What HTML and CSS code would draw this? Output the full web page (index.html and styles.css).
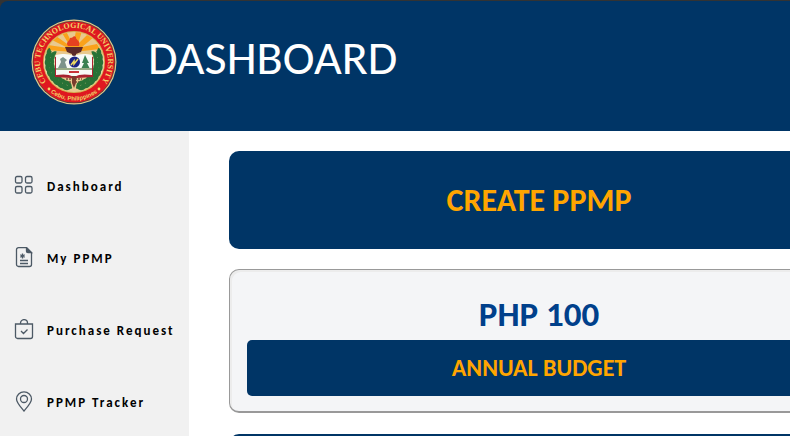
FILE: index.html
```html
<!DOCTYPE html>
<html lang="en">
<head>
<meta charset="utf-8">
<title>Dashboard</title>
<link rel="stylesheet" href="styles.css">
</head>
<body>
<header class="header">
  <svg class="seal" viewBox="0 0 86 86" role="img" aria-label="Cebu Technological University seal">
    <defs>
      <path id="arc-top" d="M19 67A34 34 0 1 1 67 67"/>
      <path id="arc-bottom" d="M8 59A38.500 38.500 0 0 0 78 59"/>
      <clipPath id="inner"><circle cx="43" cy="43" r="30"/></clipPath>
      <path id="leaf" d="M18 47C13 45 13 41 15 38c3 2 4 4 3 9zM18 47c0-4 1-7 5-8 1 4-1 7-5 8z"/>
      <g id="laurel">
        <path d="M20 32C14 49 25 66 41 69" fill="none" stroke="#287236" stroke-width="1.500"/>
        <use href="#leaf" transform="rotate(20 43 43)"/>
        <use href="#leaf" transform="rotate(8 43 43)"/>
        <use href="#leaf" transform="rotate(-4 43 43)"/>
        <use href="#leaf" transform="rotate(-16 43 43)"/>
        <use href="#leaf" transform="rotate(-28 43 43)"/>
        <use href="#leaf" transform="rotate(-40 43 43)"/>
        <use href="#leaf" transform="rotate(-52 43 43)"/>
        <use href="#leaf" transform="rotate(-64 43 43)"/>
        <use href="#leaf" transform="rotate(-76 43 43)"/>
      </g>
    </defs>
    <circle cx="43" cy="43" r="42.5" fill="#e2c98a"/>
    <circle cx="43" cy="43" r="41.300" fill="#55413c"/>
    <circle cx="43" cy="43" r="40.6" fill="#df1820"/>
    <circle cx="43" cy="43" r="31" fill="#d6b553"/>
    <circle cx="43" cy="43" r="30" fill="#e9c98e"/>
    <g clip-path="url(#inner)">
      <path fill="#faa21b" d="M43 33L15 31 17 26 37 29 21 21 25 17 39 27 31 14h5l6 12 3-14h6l-4 13 11-11 5 4-12 10 15-3 3 5z"/>
      <path fill="#ead8af" d="M13 36h60v20H13z"/>
    </g>
    <use href="#laurel" fill="#287236"/>
    <use href="#laurel" fill="#287236" transform="matrix(-1 0 0 1 86 0)"/>
    <path fill="#5b2929" d="M34 28h18l-2 5-5 2v4h-4v-4l-5-2z"/>
    <path fill="#e54120" d="M37 27c-3-4 2-5 2-8 4 0 3-3 6-1-1 3 5 3 3 9z"/>
    <path fill="#a92330" d="M24 38h38v20l-16 1-3 2-3-2-16-1z"/>
    <path fill="#f8faf6" d="M25 36c8-2 13-1 18 1 5-2 10-3 18-1v20c-7-1-13-1-18 2-5-3-11-3-18-2z"/>
    <path fill="#7d938b" d="M29 40l3-2 4 3-2 2 2 6h-9l3-6z"/>
    <path fill="#3c8152" d="M54 36l4 8h-2l3 6h-9l3-6h-2z"/>
    <path fill="#98ab86" d="M25 49h36v2H25z"/>
    <circle cx="43.5" cy="43" r="5.5" fill="#1a2384"/>
    <path d="M40 46l3-4v3l4-5" fill="none" stroke="#f0dd61" stroke-width="1.5"/>
    <path d="M38 53h10" stroke="#c93239" stroke-width="2"/>
    <path d="M35 60h16M38 63h10" stroke="#77503b" stroke-width="1.5" stroke-dasharray="2 1"/>
    <path fill="#793b2d" d="M41 57h4v7l-2 5-2-5z"/>
    <g fill="#f1d36a">
      <text class="seal-name"><textPath href="#arc-top" startOffset="50%" text-anchor="middle">CEBU TECHNOLOGICAL UNIVERSITY</textPath></text>
      <text class="seal-place"><textPath href="#arc-bottom" startOffset="50%" text-anchor="middle">Cebu, Philippines</textPath></text>
      <circle cx="18" cy="70" r="1.4"/><circle cx="68" cy="70" r="1.4"/>
    </g>
  </svg>
  <h1 class="title">DASHBOARD</h1>
</header>
<div class="layout">
  <nav class="sidebar">
    <a class="nav-link" href="#">
      <svg class="icon" viewBox="0 0 20 22"><rect x="1.5" y="1.5" width="6.5" height="6.5" rx="1.5"/><rect x="11.5" y="1.5" width="6.5" height="6.5" rx="1.5"/><rect x="1.5" y="11.5" width="6.5" height="6.5" rx="1.5"/><rect x="11.5" y="11.5" width="6.5" height="6.5" rx="1.5"/></svg>
      Dashboard</a>
    <a class="nav-link" href="#">
      <svg class="icon" viewBox="0 0 20 22"><path d="M4.500 .700h8l5 5V17.500a2 2 0 0 1-2 2h-11a2 2 0 0 1-2-2V2.700a2 2 0 0 1 2-2z"/><path class="solid" d="M12.500 .700v3.500a1.500 1.500 0 0 0 1.500 1.500h3.500z"/><path d="M6 13.500h8M6 16.500h8M8.500 6.500v5M6.300 7.700l4.400 2.600M10.700 7.700l-4.400 2.600"/></svg>
      My PPMP</a>
    <a class="nav-link" href="#">
      <svg class="icon" viewBox="0 0 20 22"><path d="M1.500 5h17v12.500a2 2 0 0 1-2 2h-13a2 2 0 0 1-2-2zM6.500 5V4a3.500 3.400 0 0 1 7 0v1M7 12l2.500 2.500 4-4"/></svg>
      Purchase Request</a>
    <a class="nav-link" href="#">
      <svg class="icon" viewBox="0 0 20 22"><path d="M10 20C8 17.500 2.500 12 2.500 8a7.500 7.200 0 0 1 15 0c0 4-5.500 9.500-7.500 12z"/><circle cx="10" cy="8" r="3.500"/></svg>
      PPMP Tracker</a>
  </nav>
  <main class="content">
    <button class="create" type="button">CREATE PPMP</button>
    <section class="budget">
      <p class="amount">PHP 100</p>
      <h2 class="caption">ANNUAL BUDGET</h2>
    </section>
    <div class="next-panel"></div>
  </main>
</div>
</body>
</html>
```
FILE: styles.css
```css
* { box-sizing: border-box; }

html {
  background: #333;
  overflow: hidden;
}

body {
  margin: 0;
  padding-top: 1px;
  font-family: Carlito, Calibri, Lato, sans-serif;
}

.header {
  display: flex;
  align-items: center;
  gap: 31px;
  padding: 18px 31px 26px;
  background: #003566;
  border-top-left-radius: 8px;
}

.seal {
  width: 86px;
  height: 86px;
  flex: none;
}

.seal-name {
  font: bold 8px "Liberation Serif", serif;
}

.seal-place {
  font: bold 6px "Liberation Sans", sans-serif;
}

.title {
  margin: 0;
  padding-bottom: 8px;
  color: #fff;
  font-size: 48px;
  font-weight: 400;
  line-height: 48px;
}

.layout {
  display: flex;
  min-height: calc(100vh - 131px);
  background: #fff;
}

.sidebar {
  flex: none;
  width: 189px;
  padding-top: 19px;
  background: #f1f1f1;
}

.nav-link {
  display: flex;
  align-items: center;
  gap: 13px;
  height: 72px;
  padding-left: 14px;
  color: #000;
  font-size: 13px;
  font-weight: 700;
  letter-spacing: 2px;
  text-decoration: none;
}

.icon {
  width: 20px;
  height: 22px;
  flex: none;
  fill: none;
  stroke: #4c5965;
  stroke-width: 1.3;
}

.icon .solid { fill: #4c5965; }

.content {
  flex: 1 0 660px;
  padding: 20px 0 0 40px;
}

.content > * { width: 620px; }

.create {
  display: block;
  height: 98px;
  margin-bottom: 20px;
  border: 0;
  border-radius: 10px;
  background: #003566;
  color: #ffa500;
  font: 700 32px Carlito, Calibri, Lato, sans-serif;
}

.budget {
  margin-bottom: 21px;
  padding: 24px 17px 15px;
  border: 1px solid #999;
  border-bottom-width: 2px;
  border-radius: 10px;
  background: #f4f5f7;
  box-shadow: inset 2px 2px 0 #ececec;
  text-align: center;
}

.amount {
  margin: 0 0 6px;
  color: #00408b;
  font-size: 35px;
  font-weight: 700;
  line-height: 40px;
}

.caption {
  margin: 0;
  border-radius: 5px;
  background: #003566;
  color: #ffa500;
  font-size: 24px;
  line-height: 56px;
}

.next-panel {
  height: 98px;
  border-radius: 10px;
  background: #003566;
}
```
